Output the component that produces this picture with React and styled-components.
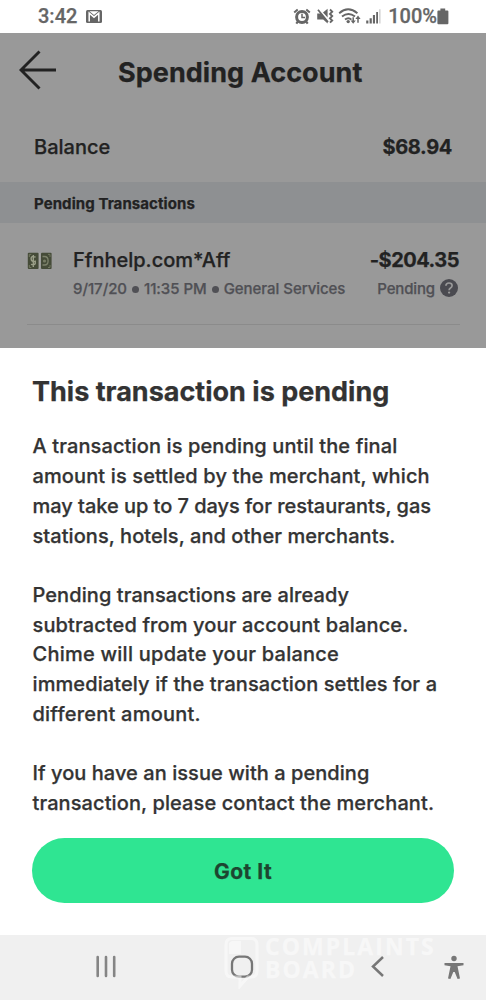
import styled, { createGlobalStyle } from 'styled-components'

const GlobalStyle = createGlobalStyle`
  * {
    box-sizing: border-box;
  }

  body {
    margin: 0;
    background-color: #fff;
  }

  p,
  h1,
  h2 {
    margin: 0;
  }
`

const Screen = styled.div`
  display: flex;
  flex-direction: column;
  width: 486px;
  height: 1000px;
  overflow: hidden;
  font-family: Inter, 'Liberation Sans', sans-serif;
  color: #333;
  /*slightly heavier than the installed weights*/
  -webkit-text-stroke: 0.25px currentColor;
`

/* STATUS BAR */
const StatusBar = styled.header`
  display: flex;
  justify-content: space-between;
  height: 33px;
  padding: 0 37px 0 38px;
  color: #666;
  font-family: Roboto, sans-serif;
  font-size: 20px;
  font-weight: 500;
  line-height: 33px;

  svg {
    display: block;
  }
`

const StatusGroup = styled.div`
  display: flex;
  align-items: center;
`

const Clock = styled.span`
  width: 48px;
`

const Percent = styled.span`
  margin-left: 7px;
`

/* DIMMED ACCOUNT PAGE */
const Account = styled.main`
  height: 315px;
  background-color: #999;
  color: #222;
`

const TitleRow = styled.div`
  display: flex;
  align-items: center;
  height: 79px;
  padding-left: 19px;

  svg {
    display: block;
    margin-top: -5px;
  }
`

const PageTitle = styled.h1`
  margin-left: 61px;
  font-size: 27px;
  font-weight: 700;
  line-height: 34px;
  letter-spacing: 0.05px;
`

const BalanceRow = styled.div`
  display: flex;
  justify-content: space-between;
  height: 70px;
  padding: 0 34px;
  font-size: 20px;
  font-weight: 500;
  line-height: 70px;
`

const Amount = styled.span`
  font-size: 20px;
  font-weight: 700;
  letter-spacing: ${({ $track }) => $track || '-0.35px'};
`

const SectionTitle = styled.h2`
  height: 41px;
  padding-left: 34px;
  background-color: #8e9092;
  font-size: 15px;
  font-weight: 700;
  line-height: 43px;
  letter-spacing: 0.08px;
`

const Transaction = styled.div`
  display: flex;
  height: 102px;
  margin: 0 26px 0 27px;
  padding-top: 22px;
  border-bottom: 1px solid #8b8b8b;

  .bills {
    display: block;
    margin-top: 7px;
  }
`

const Details = styled.div`
  flex: 1;
  margin-left: 21px;
`

const Merchant = styled.p`
  font-size: 20px;
  font-weight: 500;
  line-height: 31px;
`

const Meta = styled.p`
  display: flex;
  align-items: center;
  color: #505055;
  font-size: 15px;
  font-weight: 500;
  line-height: 26px;
  letter-spacing: ${({ $track }) => $track || '-0.04px'};
`

const Dot = styled.span`
  width: 7px;
  height: 7px;
  margin: 1px 5px 0;
  border-radius: 50%;
  background-color: #505055;
`

const Side = styled.div`
  display: flex;
  flex-direction: column;
  align-items: flex-end;
  padding-right: 1px;
  line-height: 31px;

  svg {
    display: block;
    margin: -3px 1px 0 5px;
  }
`

/* BOTTOM SHEET */
const Sheet = styled.section`
  height: 587px;
  padding: 27px 32px 0;
  background-color: #fff;
`

const SheetTitle = styled.h2`
  font-size: 27px;
  font-weight: 700;
  line-height: 34px;
`

const Copy = styled.div`
  margin-top: 23.4px;
  padding-left: 0.5px;
  font-size: 20px;
  font-weight: 500;
  line-height: 29.7px;
`

const Paragraph = styled.p`
  margin-bottom: 29.7px;
`

const Line = styled.span`
  display: block;
  white-space: nowrap;
  letter-spacing: ${({ $track }) => $track}px;
`

const Button = styled.button`
  display: block;
  width: 422px;
  height: 65px;
  margin-top: -9.8px;
  padding: 0;
  border: 0;
  border-radius: 33px;
  background-color: #2fe592;
  color: #1d4530;
  font-family: inherit;
  font-size: 21px;
  font-weight: 700;
  line-height: 67px;
  letter-spacing: 0.5px;
  cursor: pointer;
`

/* SYSTEM NAVIGATION */
const NavBar = styled.nav`
  position: relative;
  display: flex;
  align-items: flex-start;
  height: 65px;
  padding: 20px 21px 0 95px;
  background-color: #f0f0f0;

  svg {
    display: block;
  }
`

const NavItem = styled.div`
  width: ${({ $width }) => $width}px;
`

const Watermark = styled.div`
  position: absolute;
  top: 0;
  left: 224px;
  display: flex;
  color: #fff;
  opacity: 0.5;
  font-family: 'Open Sans', sans-serif;
  pointer-events: none;
`

const WatermarkName = styled.div`
  display: flex;
  flex-direction: column;
  margin-left: 5px;
`

const WatermarkWord = styled.span`
  height: 23px;
  font-size: 23px;
  font-weight: 700;
  line-height: 23px;
  letter-spacing: 2.05px;
`

const paragraphs = [
  [
    ['A transaction is pending until the final', 0.12],
    ['amount is settled by the merchant, which', 0.12],
    ['may take up to 7 days for restaurants, gas', -0.03],
    ['stations, hotels, and other merchants.', 0.06],
  ],
  [
    ['Pending transactions are already', 0.08],
    ['subtracted from your account balance.', 0.12],
    ['Chime will update your balance', 0.24],
    ['immediately if the transaction settles for a', 0.1],
    ['different amount.', 0.23],
  ],
  [
    ['If you have an issue with a pending', 0.05],
    ['transaction, please contact the merchant.', 0.1],
  ],
]

const MailIcon = () => (
  <svg width="16" height="13" viewBox="0 0 16 13">
    <rect width="16" height="13" rx="1.5" fill="#666" />
    <path
      d="M3.2 11.6V3.2L8 7.2l4.8-4v8.4"
      fill="none"
      stroke="#fff"
      strokeWidth="1.5"
    />
    <path d="M3.4 1.3h9.2L8 5z" fill="#fff" />
  </svg>
)

// alarm, muted vibrate, wifi and signal share one drawing
const StatusIcons = () => (
  <svg width="88" height="17" viewBox="0 0 88 17">
    <g fill="none" stroke="#666">
      <circle cx="9" cy="9" r="5.4" strokeWidth="3" />
      <path d="M9 5.8V9.6h3" strokeWidth="1.5" />
      <path d="M1.2 4.6l3.5-3M16.8 4.6l-3.5-3" strokeWidth="2" />
      <path d="M5 13.4l-1.7 2.2M13 13.4l1.7 2.2" strokeWidth="2.2" />
      <path
        d="M37 1.5l2.2 2.2L37 5.9l2.2 2.2L37 10.3l2.2 2.2L37 14.7"
        strokeWidth="1.9"
      />
      <path d="M25 1.8l10 12.2" strokeWidth="1.7" />
      <path
        d="M46.2 5.2q8.8-7.8 18.2 0M49 8.6q6.4-5.4 13 0M52 11.6q3.4-2.7 6.4 0"
        strokeWidth="1.9"
      />
      <path d="M60.2 9.2v5M65 14.8v-5" strokeWidth="1.5" />
    </g>
    <g fill="#666">
      <path d="M24.2 5.6h4.4l6 8.6v1.2l-4.4-4h-6zM30 4.4l4.6-3.6v8.6z" />
      <circle cx="55.2" cy="13.6" r="1.7" />
      <path d="M57.6 12.4h5.2l-2.6 3.4zM62.4 11h5.2L65 7.6z" />
      <path d="M73.2 12.4h2.2v3h-2.2zM76.6 10.2h2.2v5.2h-2.2zM79.9 7H82v8.4h-2.1zM83.2 4H85v11.4h-1.8z" />
    </g>
    <path d="M86.2 1.2h1.3v14.2h-1.3z" fill="#ccc" />
  </svg>
)

const BatteryIcon = () => (
  <svg width="12" height="17" viewBox="0 0 12 17">
    <path
      d="M3.4.6h4.8v1.800h2.200q1 0 1 1v11.800q0 1-1 1H1.400q-1 0-1-1V3.400q0-1 1-1h2z"
      fill="#666"
    />
  </svg>
)

const BackArrow = () => (
  <svg width="38" height="40" viewBox="0 0 38 40">
    <path
      d="M37 20H2M20.5 1.5L2 20l18.5 18.5"
      fill="none"
      stroke="#222"
      strokeWidth="2.9"
    />
  </svg>
)

const BillsIcon = () => (
  <svg className="bills" width="25" height="18" viewBox="0 0 25 18">
    <rect x="0.8" y="0.8" width="10.8" height="16.2" rx="1" fill="#454b38" />
    <rect x="14" y="0.8" width="10.6" height="16.2" rx="1" fill="#454b38" />
    <path
      d="M2.3 5V2.4h2M2.3 13v2.5h2M23 5V2.4h-2M23 13v2.5h-2"
      fill="none"
      stroke="#737861"
    />
    <path
      d="M8.6 5.2Q4 3.4 4.1 6.8t4.2 2.5q.6 4.6-4.3 3M6.3 3v12"
      fill="none"
      stroke="#9b9f88"
      strokeWidth="1.4"
    />
    <path
      d="M15.5 4.5h2q3.6 0 3.6 4.3T17.500 13h-2"
      fill="none"
      stroke="#7d826b"
      strokeWidth="1.3"
    />
    <circle cx="17.5" cy="9" r="1.6" fill="#767b64" />
    <path d="M12.6 1v16" stroke="#a6a6a0" strokeWidth="1.4" />
  </svg>
)

const HelpIcon = () => (
  <svg width="18" height="18" viewBox="0 0 18 18">
    <circle cx="9" cy="9" r="9" fill="#4a4a50" />
    <path
      d="M5.9 6.8Q6 4 9 4t3.1 2.5Q12.1 8 10.5 8.9 9.1 9.7 9.1 11.2"
      fill="none"
      stroke="#999"
      strokeWidth="1.7"
    />
    <circle cx="9.1" cy="13.6" r="1.15" fill="#999" />
  </svg>
)

export default function App() {
  return (
    <>
      <GlobalStyle />
      <Screen>
        <StatusBar>
          <StatusGroup>
            <Clock>3:42</Clock>
            <MailIcon />
          </StatusGroup>
          <StatusGroup>
            <StatusIcons />
            <Percent>100%</Percent>
            <BatteryIcon />
          </StatusGroup>
        </StatusBar>

        <Account>
          <TitleRow>
            <BackArrow />
            <PageTitle>Spending Account</PageTitle>
          </TitleRow>
          <BalanceRow>
            <span>Balance</span>
            <Amount>$68.94</Amount>
          </BalanceRow>
          <SectionTitle>Pending Transactions</SectionTitle>
          <Transaction>
            <BillsIcon />
            <Details>
              <Merchant>Ffnhelp.com*Aff</Merchant>
              <Meta>
                9/17/20
                <Dot />
                11:35 PM
                <Dot />
                General Services
              </Meta>
            </Details>
            <Side>
              <Amount $track="-0.5px">-$204.35</Amount>
              <Meta $track="-0.15px">
                Pending
                <HelpIcon />
              </Meta>
            </Side>
          </Transaction>
        </Account>

        <Sheet>
          <SheetTitle>This transaction is pending</SheetTitle>
          <Copy>
            {paragraphs.map((lines) => (
              <Paragraph key={lines[0][0]}>
                {lines.map(([text, track]) => (
                  <Line key={text} $track={track}>
                    {text}
                  </Line>
                ))}
              </Paragraph>
            ))}
          </Copy>
          <Button type="button">Got It</Button>
        </Sheet>

        <NavBar>
          <NavItem $width={135}>
            <svg width="22" height="23" viewBox="0 0 22 23">
              <path
                d="M2.7 2v19M11 2v19M19.2 2v19"
                stroke="#858585"
                strokeWidth="2.6"
                strokeLinecap="round"
              />
            </svg>
          </NavItem>
          <NavItem $width={141}>
            <svg width="24" height="24" viewBox="0 0 24 24">
              <rect
                x="2"
                y="1.7"
                width="20"
                height="20"
                rx="7"
                fill="none"
                stroke="#777"
                strokeWidth="2.3"
              />
            </svg>
          </NavItem>
          <NavItem $width={73}>
            <svg width="14" height="24" viewBox="0 0 14 24">
              <path
                d="M12 2L2 11.5 12 21"
                fill="none"
                stroke="#777"
                strokeWidth="2.5"
              />
            </svg>
          </NavItem>
          <NavItem $width={20}>
            <svg width="20" height="25" viewBox="0 0 20 25">
              <circle cx="10" cy="3.5" r="2.7" fill="#777" />
              <path
                d="M.5 8h19v2.3l-6 .9 2.5 12.3-2.4.5L10.7 17H9.3L6.4 24 4 23.5 6.5 11.2l-6-.9z"
                fill="#777"
              />
            </svg>
          </NavItem>
          <Watermark>
            <svg width="36" height="54" viewBox="0 0 36 54">
              <path
                d="M8 3.5h19q6 0 6 6V36q0 6-6 6h-3l-8 9v-9H8q-6 0-6-6V9.5q0-6 6-6z"
                fill="none"
                stroke="#fff"
                strokeWidth="3"
              />
              <path d="M5 8q2-2 4-2h8v13H5z" fill="#fff" />
            </svg>
            <WatermarkName>
              <WatermarkWord>COMPLAINTS</WatermarkWord>
              <WatermarkWord>BOARD</WatermarkWord>
            </WatermarkName>
          </Watermark>
        </NavBar>
      </Screen>
    </>
  )
}
